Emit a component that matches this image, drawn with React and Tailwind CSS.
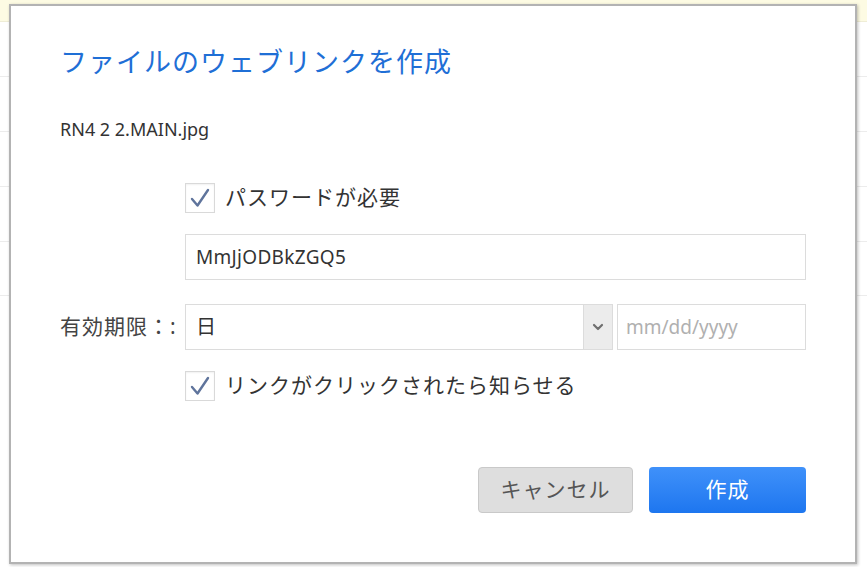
import React from 'react';

const jp = { fontFamily: '"Noto Sans", "Noto Sans CJK JP", sans-serif' };

function CheckBox() {
  return (
    <span className="w-[30px] h-[30px] shrink-0 border border-[#d9d9d9] bg-white shadow-[inset_0_1px_2px_rgba(0,0,0,0.06)] flex items-center justify-center">
      <svg width="24" height="24" viewBox="0 0 24 24">
        <polyline points="4,13 9.5,19.5 20,4" fill="none" stroke="#5f749c" strokeWidth="2.4" strokeLinecap="round" strokeLinejoin="round" />
      </svg>
    </span>
  );
}

export default function App() {
  return (
    <div className="relative w-[867px] h-[567px] overflow-hidden bg-white" style={jp}>
      {/* page behind the dialog */}
      <div className="h-[22px] bg-[#fdfbe3] border-b border-[#efedd6]" />
      <div className="h-[55px] border-b border-[#ececec]" />
      <div className="h-[55px] border-b border-[#ececec]" />
      <div className="h-[55px] border-b border-[#ececec]" />
      <div className="h-[55px] border-b border-[#ececec]" />
      <div className="h-[54px] border-b border-[#ececec]" />

      {/* dialog */}
      <div className="absolute left-[9px] top-[4px] w-[848px] h-[560px] bg-white border-2 border-[#b3b3b3] shadow-[1px_1px_3px_rgba(0,0,0,0.25)] px-[49px] flex flex-col">
        <div className="mt-[38px] h-[36px] flex items-center text-[27px] text-[#1f6fd6] tracking-[1px]">
          ファイルのウェブリンクを作成
        </div>

        <div className="mt-[37px] h-[24px] flex items-center text-[18px] text-[#333]">
          RN4 2 2.MAIN.jpg
        </div>

        <div className="mt-[41px] h-[31px] flex items-center gap-[10px] pl-[125px]">
          <CheckBox />
          <span className="text-[21px] tracking-[1px] text-[#333]">パスワードが必要</span>
        </div>

        <div className="mt-[21px] ml-[125px] h-[46px] border border-[#dcdcdc] flex items-center px-[10px] text-[19px] tracking-[0.3px] text-[#333]">
          MmJjODBkZGQ5
        </div>

        <div className="mt-[24px] h-[46px] flex items-center">
          <div className="w-[125px] text-[21px] tracking-[1px] text-[#444] whitespace-nowrap">有効期限：:</div>
          <div className="w-[428px] h-full border border-[#dcdcdc] flex">
            <div className="flex-1 flex items-center px-[10px] text-[20px] text-[#333]">日</div>
            <div className="w-[29px] border-l border-[#dcdcdc] bg-[#ececec] flex items-center justify-center">
              <svg width="12" height="8" viewBox="0 0 12 8">
                <polyline points="2,2 6,6 10,2" fill="none" stroke="#6f6f6f" strokeWidth="2.2" strokeLinecap="round" strokeLinejoin="round" />
              </svg>
            </div>
          </div>
          <div className="ml-[4px] flex-1 h-full border border-[#dcdcdc] flex items-center px-[8px] text-[19px] text-[#b0b0b0]">
            mm/dd/yyyy
          </div>
        </div>

        <div className="mt-[20px] h-[31px] flex items-center gap-[10px] pl-[125px]">
          <CheckBox />
          <span className="text-[21px] tracking-[1px] text-[#333]">リンクがクリックされたら知らせる</span>
        </div>

        <div className="mt-[66px] h-[46px] flex justify-end gap-[16px]">
          <button className="w-[155px] h-full rounded-[4px] border border-[#c9c9c9] bg-[#dedede] text-[21px] tracking-[1px] text-[#555]">
            キャンセル
          </button>
          <button className="w-[157px] h-full rounded-[4px] bg-gradient-to-b from-[#3f91fa] to-[#1d76ef] text-[21px] tracking-[1px] text-white">
            作成
          </button>
        </div>
      </div>
    </div>
  );
}
